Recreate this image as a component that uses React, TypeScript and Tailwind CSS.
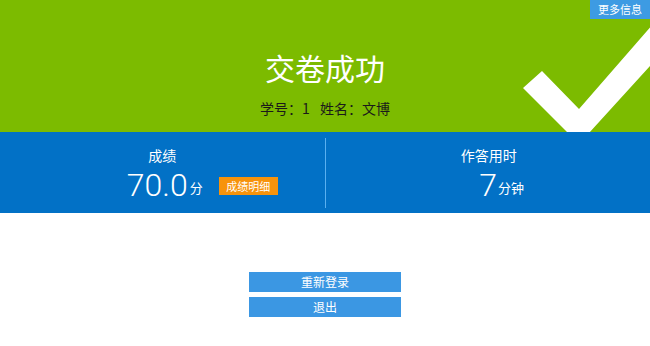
import React from "react";

const font = { fontFamily: '"Noto Sans CJK SC", "Noto Sans", sans-serif' };
const digitFont = { fontFamily: 'Roboto, "Liberation Sans", sans-serif' };

export default function App() {
  return (
    <div className="w-[650px] h-[346px] bg-white overflow-hidden" style={font}>
      <div className="relative h-[132px] bg-[#7cbb00] overflow-hidden flex flex-col items-center">
        <svg
          className="absolute left-0 top-0"
          width="650"
          height="132"
          viewBox="0 0 650 132"
        >
          <polygon
            points="523,88 542,71 579,109 660,16 660,55 579,144"
            fill="#ffffff"
          />
        </svg>
        <div className="absolute right-0 top-0 w-[60px] h-[19px] bg-[#3d9be3] text-white text-[11px] leading-[19px] text-center">
          更多信息
        </div>
        <div className="relative mt-[45px] text-white text-[30px] leading-[44px]">交卷成功</div>
        <div className="relative mt-[10px] text-[#1a1a1a] text-[14px] leading-[18px] flex gap-[10px]">
          <span>学号：1</span>
          <span>姓名：文博</span>
        </div>
      </div>
      <div className="h-[81px] bg-[#0271c6] flex items-center text-white">
        <div className="flex-1 flex flex-col items-center">
          <div className="text-[14px] leading-[18px] mt-[3px]">成绩</div>
          <div className="flex items-end pl-[80px] mt-[3px]">
            <span className="text-[32px] leading-[36px] font-light" style={digitFont}>70.0</span>
            <span className="text-[13px] leading-[18px] mb-[6px] ml-[2px]">分</span>
            <span className="ml-[16px] mb-[8px] w-[59px] h-[18px] bg-[#f7930c] text-[11px] leading-[18px] text-center">成绩明细</span>
          </div>
        </div>
        <div className="w-px h-[70px] bg-[#5ab0f0]"></div>
        <div className="flex-1 flex flex-col items-center">
          <div className="text-[14px] leading-[18px] mt-[3px] ml-[2px]">作答用时</div>
          <div className="flex items-end mt-[3px] pl-[28px]">
            <span className="text-[32px] leading-[36px] font-light" style={digitFont}>7</span>
            <span className="text-[13px] leading-[18px] mb-[6px] ml-[1px]">分钟</span>
          </div>
        </div>
      </div>
      <div className="flex flex-col items-center pt-[59px] gap-[5px]">
        <div className="w-[152px] h-[20px] bg-[#3b97e3] text-white text-[12px] leading-[20px] text-center">重新登录</div>
        <div className="w-[152px] h-[20px] bg-[#3b97e3] text-white text-[12px] leading-[20px] text-center">退出</div>
      </div>
    </div>
  );
}
